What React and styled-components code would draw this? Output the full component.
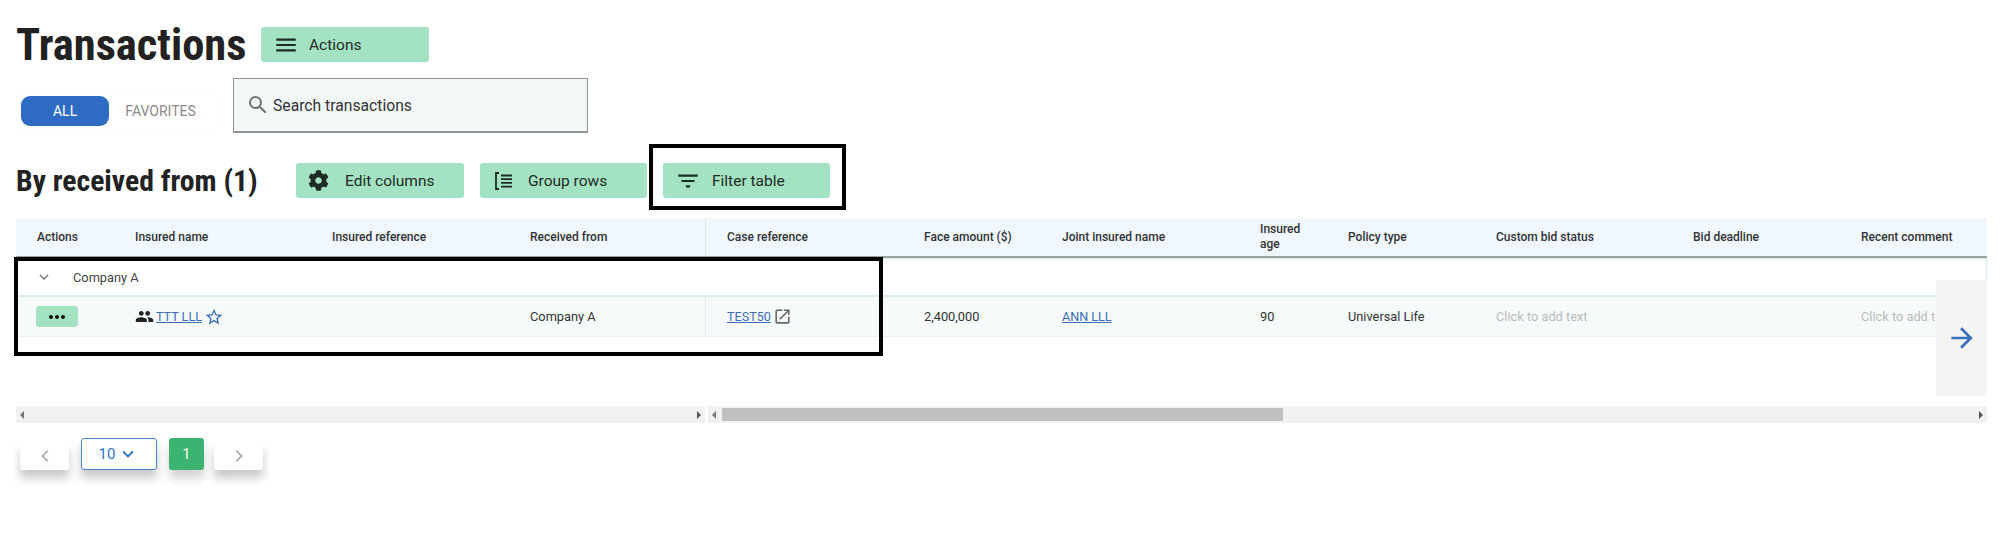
import React from 'react';
import styled, { createGlobalStyle } from "styled-components";
import { FaCog } from "react-icons/fa";
import {
    MdMenu, MdSearch, MdFilterList, MdPeople, MdStarBorder, MdOpenInNew,
    MdKeyboardArrowDown, MdExpandMore, MdArrowForward, MdChevronLeft, MdChevronRight, MdMoreHoriz
} from "react-icons/md";

const columns = [
    { label: "Actions", width: 98 },
    { label: "Insured name", width: 197 },
    { label: "Insured reference", width: 198 },
    { label: "Received from", width: 196 },
    { label: "Case reference", width: 198, divider: true },
    { label: "Face amount ($)", width: 138 },
    { label: "Joint insured name", width: 198 },
    { label: "Insured age", width: 88, narrow: true },
    { label: "Policy type", width: 148 },
    { label: "Custom bid status", width: 197 },
    { label: "Bid deadline", width: 168 },
    { label: "Recent comment", width: 147 },
];

const template = columns.map((c) => `${c.width}px`).join(" ");

function GroupRowsIcon() {
    return (
        <svg width="24" height="24" viewBox="0 0 24 24" fill="none" stroke="#1f2a26" strokeWidth="1.8">
            <path d="M7 4H4v16h3" />
            <path d="M9 6.5h11M9 10.2h11M9 13.9h11M9 17.6h11" />
        </svg>
    );
}

function App() {
    return (
        <Page>
            <GlobalStyle />
            <TitleRow>
                <Title>Transactions</Title>
                <ActionButton $width={168} $gap={10}>
                    <MdMenu size={26} />
                    <span>Actions</span>
                </ActionButton>
            </TitleRow>

            <SearchRow>
                <Toggle>
                    <ToggleOption $active>ALL</ToggleOption>
                    <ToggleOption>FAVORITES</ToggleOption>
                </Toggle>
                <SearchBox>
                    <MdSearch size={24} color="#6c7476" />
                    <span>Search transactions</span>
                </SearchBox>
            </SearchRow>

            <SectionRow>
                <SectionTitle>By received from (1)</SectionTitle>
                <ActionButton $width={168} $gap={16}>
                    <FaCog size={21} />
                    <span>Edit columns</span>
                </ActionButton>
                <ActionButton $width={167} $gap={12}>
                    <GroupRowsIcon />
                    <span>Group rows</span>
                </ActionButton>
                <ActionButton $width={167} $gap={11}>
                    <MdFilterList size={26} />
                    <span>Filter table</span>
                </ActionButton>
                <Highlight $left={649} $top={144} $width={197} $height={66} />
            </SectionRow>

            <TableWrap>
                <HeaderRow>
                    {columns.map((c) => (
                        <HeaderCell key={c.label} $divider={c.divider} $narrow={c.narrow}>{c.label}</HeaderCell>
                    ))}
                </HeaderRow>
                <TableBody>
                    <GroupRow>
                        <MdExpandMore size={18} color="#777" />
                        <span>Company A</span>
                    </GroupRow>
                    <DataRow>
                        <Cell><DotsButton><MdMoreHoriz size={24} /></DotsButton></Cell>
                        <Cell $tight>
                            <MdPeople size={19} color="#222" />
                            <TableLink>TTT LLL</TableLink>
                            <MdStarBorder size={20} color="#3a6db8" />
                        </Cell>
                        <Cell />
                        <Cell>Company A</Cell>
                        <Cell $divider $tight>
                            <TableLink>TEST50</TableLink>
                            <MdOpenInNew size={19} color="#666" />
                        </Cell>
                        <Cell>2,400,000</Cell>
                        <Cell><TableLink>ANN LLL</TableLink></Cell>
                        <Cell>90</Cell>
                        <Cell>Universal Life</Cell>
                        <Cell $muted>Click to add text</Cell>
                        <Cell />
                        <Cell $muted>Click to add text</Cell>
                    </DataRow>
                    <ScrollArrow><MdArrowForward size={32} /></ScrollArrow>
                </TableBody>
                <ScrollRow>
                    <ScrollTrack $width={689}>
                        <Arrow $dir="left" />
                        <Arrow $dir="right" />
                    </ScrollTrack>
                    <ScrollTrack $grow>
                        <Arrow $dir="left" />
                        <Thumb />
                        <Arrow $dir="right" />
                    </ScrollTrack>
                </ScrollRow>
                <Highlight $left={-2} $top={39} $width={869} $height={99} />
            </TableWrap>

            <Pagination>
                <PageButton><MdChevronLeft size={24} /></PageButton>
                <SizeSelect>10 <MdKeyboardArrowDown size={22} /></SizeSelect>
                <CurrentPage>1</CurrentPage>
                <PageButton $next><MdChevronRight size={24} /></PageButton>
            </Pagination>
        </Page>
    );
}


const GlobalStyle = createGlobalStyle`
    html, body {
        margin: 0;
        background: #fff;
        overflow: hidden;
    }
    * {
        box-sizing: border-box;
    }
    body {
        font-family: Roboto, "Liberation Sans", sans-serif;
        color: #2b2b2b;
    }
`

const Page = styled.div`
    position: relative;
    width: 2000px;
    height: 539px;
    padding: 27px 13px 0 16px;
`

const TitleRow = styled.div`
    display: flex;
    align-items: center;
`

const Title = styled.h1`
    width: 245px;
    margin: 0;
    font-size: 44.5px;
    line-height: 34px;
    font-weight: 700;
    font-stretch: 75%;
    white-space: nowrap;
    color: #222;
`

const ActionButton = styled.button`
    display: flex;
    align-items: center;
    gap: ${(p) => p.$gap}px;
    width: ${(p) => p.$width}px;
    height: 35px;
    padding: 0 0 0 12px;
    border: none;
    border-radius: 3px;
    background: #a3e3c3;
    color: #1f2a26;
    font-family: inherit;
    font-size: 15.5px;
    white-space: nowrap;
`

const SearchRow = styled.div`
    display: flex;
    align-items: center;
    gap: 16px;
    margin-top: 16px;
`

const Toggle = styled.div`
    display: flex;
    align-items: center;
    width: 201px;
    height: 41px;
    margin-top: 11px;
    padding: 0 4px;
    border: 1px solid #fafafa;
    border-radius: 6px;
`

const ToggleOption = styled.div`
    display: flex;
    align-items: center;
    justify-content: center;
    width: ${(p) => (p.$active ? 90 : 105)}px;
    height: 30px;
    border-radius: 9px;
    background: ${(p) => (p.$active ? "#2e6cc4" : "transparent")};
    color: ${(p) => (p.$active ? "#fff" : "#8a8a8a")};
    font-size: 14px;
`

const SearchBox = styled.div`
    display: flex;
    align-items: center;
    gap: 3px;
    width: 355px;
    height: 55px;
    padding-left: 12px;
    border: 1px solid #8e9494;
    border-bottom-width: 2px;
    background: #f3f7f7;
    font-size: 15.7px;
    color: #333;
`

const SectionRow = styled.div`
    display: flex;
    align-items: center;
    gap: 16px;
    margin-top: 30px;
`

const SectionTitle = styled.h2`
    width: 264px;
    margin: 0;
    font-size: 29.7px;
    font-weight: 700;
    font-stretch: 75%;
    white-space: nowrap;
    color: #222;
`

const Highlight = styled.div`
    position: absolute;
    left: ${(p) => p.$left}px;
    top: ${(p) => p.$top}px;
    width: ${(p) => p.$width}px;
    height: ${(p) => p.$height}px;
    border: 4px solid #000;
    pointer-events: none;
`

const TableWrap = styled.div`
    position: relative;
    margin-top: 20px;
    width: 1971px;
`

const HeaderRow = styled.div`
    display: grid;
    grid-template-columns: ${template};
    height: 40px;
    background: #f0f7ff;
    border-bottom: 2px solid #9aa3a3;
`

const HeaderCell = styled.div`
    display: flex;
    align-items: center;
    padding-left: 21px;
    padding-right: ${(p) => (p.$narrow ? "30px" : "0")};
    border-left: ${(p) => (p.$divider ? "1px solid #dfe5ea" : "none")};
    font-size: 12px;
    line-height: 15px;
    font-weight: 500;
    color: #333;
`

const TableBody = styled.div`
    position: relative;
    height: 148px;
`

const GroupRow = styled.div`
    display: flex;
    align-items: center;
    gap: 20px;
    height: 39px;
    padding-left: 19px;
    border-top: 1px solid #d8f0e4;
    border-right: 1px solid #d8f0e4;
    border-bottom: 2px solid #d8f0e4;
    font-size: 12.8px;
    color: #444;
`

const DataRow = styled.div`
    display: grid;
    grid-template-columns: ${template};
    height: 40px;
    background: #f6fafa;
    border-bottom: 1px solid #eef1f1;
`

const Cell = styled.div`
    display: flex;
    align-items: center;
    gap: ${(p) => (p.$tight ? "2px" : "0")};
    padding-left: 21px;
    border-left: ${(p) => (p.$divider ? "1px solid #e6eaec" : "none")};
    font-size: 12.8px;
    color: ${(p) => (p.$muted ? "#b9bcbc" : "#333")};
    white-space: nowrap;
    overflow: hidden;
`

const TableLink = styled.a`
    color: #3a6db8;
    text-decoration: underline;
    font-size: 12.6px;
`

const DotsButton = styled.div`
    display: flex;
    align-items: center;
    justify-content: center;
    width: 42px;
    height: 21px;
    margin-left: -1px;
    border-radius: 3px;
    background: #a3e3c3;
    color: #111;
`

const ScrollArrow = styled.div`
    position: absolute;
    right: 0;
    top: 22px;
    display: flex;
    align-items: center;
    justify-content: center;
    width: 51px;
    height: 116px;
    background: #f4f4f4;
    color: #3a6fc0;
`

const ScrollRow = styled.div`
    display: flex;
    gap: 3px;
    height: 17px;
`

const ScrollTrack = styled.div`
    position: relative;
    display: flex;
    align-items: center;
    justify-content: space-between;
    width: ${(p) => (p.$grow ? "auto" : `${p.$width}px`)};
    flex: ${(p) => (p.$grow ? 1 : "none")};
    padding: 0 4px;
    background: #f1f1f1;
`

const Thumb = styled.div`
    position: absolute;
    left: 14px;
    top: 2px;
    width: 561px;
    height: 13px;
    background: #c1c1c1;
`

const Arrow = styled.span`
    width: 0;
    height: 0;
    border-top: 4px solid transparent;
    border-bottom: 4px solid transparent;
    border-right: ${(p) => (p.$dir === "left" ? "4px solid #777" : "none")};
    border-left: ${(p) => (p.$dir === "right" ? "4px solid #555" : "none")};
`

const Pagination = styled.div`
    display: flex;
    align-items: flex-end;
    gap: 12px;
    margin-top: 15px;
    padding-left: 4px;
`

const PageButton = styled.div`
    display: flex;
    align-items: center;
    justify-content: center;
    width: 49px;
    height: 28px;
    margin-left: ${(p) => (p.$next ? "-2px" : "0")};
    border-radius: 3px;
    background: #fff;
    color: #b5b5b5;
    box-shadow: 0 8px 10px rgba(0, 0, 0, 0.22);
`

const SizeSelect = styled.div`
    display: flex;
    align-items: center;
    justify-content: center;
    gap: 2px;
    width: 76px;
    height: 32px;
    border: 1px solid #4a86c5;
    border-radius: 3px;
    background: #fff;
    color: #2e75bf;
    font-size: 15px;
    box-shadow: 0 8px 10px rgba(0, 0, 0, 0.22);
`

const CurrentPage = styled.div`
    display: flex;
    align-items: center;
    justify-content: center;
    width: 35px;
    height: 32px;
    border-radius: 3px;
    background: #3cb371;
    color: #fff;
    font-size: 14px;
    box-shadow: 0 8px 10px rgba(0, 0, 0, 0.18);
`

export default App
